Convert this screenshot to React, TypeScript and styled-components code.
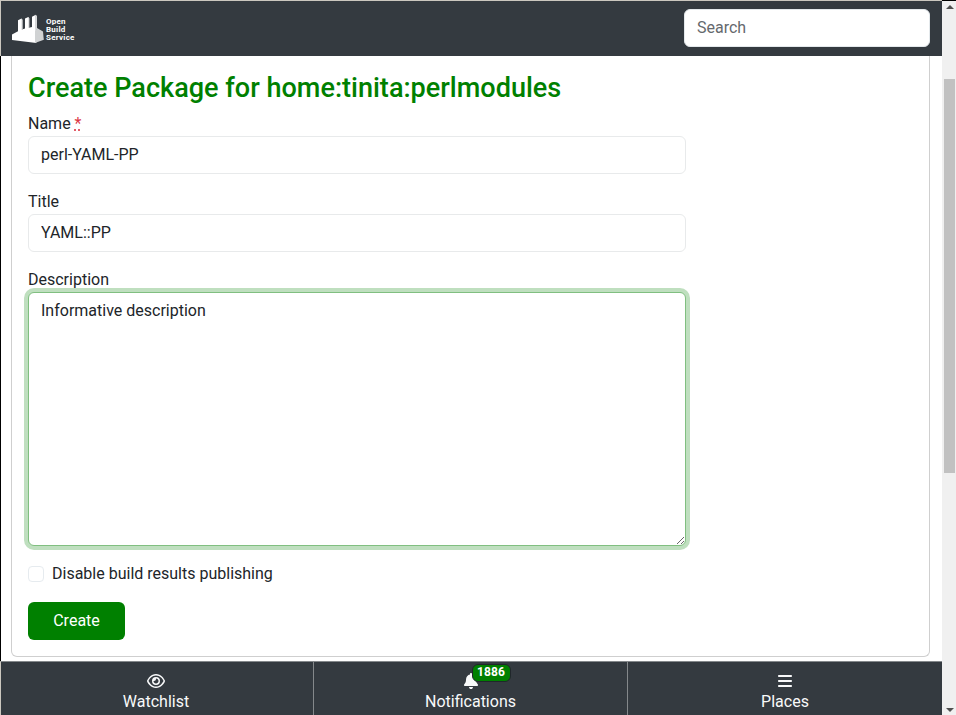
import React from "react";
import styled, { createGlobalStyle } from "styled-components";
import { FaBars, FaBell, FaRegEye } from "react-icons/fa6";

const GlobalStyle = createGlobalStyle`
  * { box-sizing: border-box; }
  body {
    margin: 0;
    overflow: hidden;
    font: 400 16px/24px Roboto, sans-serif;
    color: #212529;
    background: #fff;
  }
`;

const Window = styled.div`
  display: grid;
  grid-template: 715px / 942px 14px;
  width: 956px;
  height: 715px;
`;

const Page = styled.div`
  display: grid;
  grid-template-rows: 56px 605px 54px;
`;

const Header = styled.header`
  display: flex;
  justify-content: space-between;
  padding: 8px 12px 0 11px;
  border-top: 1px solid #cbc7bf;
  border-left: 1px solid #cbc7bf;
  background: #343a40;
`;

const Brand = styled.a`
  display: flex;
  padding-top: 5px;
  color: #fff;
`;

const BrandName = styled.span`
  display: flex;
  flex-direction: column;
  margin: 4px 0 0 2px;
  font-size: 8px;
  font-weight: 700;
  line-height: 8px;
  letter-spacing: 0.25px;
`;

const Search = styled.input`
  width: 246px;
  height: 38px;
  padding: 0 12px 1px;
  border: 1px solid #e4e9ec;
  border-radius: 6px;
  outline: 0;
  font: inherit;
  background: #fff;
  &::placeholder { color: #65696d; opacity: 1; }
`;

const Main = styled.main`
  padding: 0 12px 4px 10px;
  border-left: 1px solid #000;
`;

const Card = styled.section`
  height: 601px;
  padding: 15px 16px 0;
  border: 1px solid #cfcfcf;
  border-top: 0;
  border-radius: 0 0 6px 6px;
`;

const Heading = styled.h3`
  margin: 0 0 7px;
  color: #008000;
  font-size: 27.05px;
  font-weight: 500;
  line-height: 34px;
`;

const Form = styled.form`
  width: 658px;
`;

const Field = styled.div`
  display: flex;
  flex-direction: column;
  margin-bottom: 16px;
`;

const Label = styled.label`
  height: 24px;
`;

const Required = styled.abbr`
  color: #dc3545;
  text-decoration: underline dotted;
`;

const TextInput = styled.input`
  height: 38px;
  padding: 0 12px 1px;
  border: 1px solid #e8eaeb;
  border-radius: 6px;
  outline: 0;
  color: inherit;
  font: inherit;
`;

const TextArea = styled.textarea`
  display: block;
  height: 254px;
  padding: 6px 12px;
  border: 1px solid #80bf80;
  border-radius: 6px;
  outline: 0;
  box-shadow: 0 0 0 4px #bfdfbf;
  color: inherit;
  font: inherit;
  resize: vertical;
`;

const CheckLabel = styled.label`
  display: flex;
  align-items: center;
  gap: 8px;
  height: 24px;
  margin-bottom: 16px;
`;

const Checkbox = styled.input`
  appearance: none;
  width: 16px;
  height: 16px;
  margin: 0;
  border: 1px solid #e6ebef;
  border-radius: 4px;
`;

const Submit = styled.button`
  width: 97px;
  height: 38px;
  padding: 0 0 1px;
  border: 0;
  border-radius: 6px;
  color: #fff;
  background: #008000;
  font: inherit;
`;

const BottomNav = styled.nav`
  display: grid;
  grid-template-columns: 313px 314px 1fr;
  border-top: 1px solid #84888b;
  border-left: 1px solid #cbc7bf;
  background: #343a40;
`;

const NavItem = styled.a`
  display: flex;
  flex-direction: column;
  align-items: center;
  padding-top: 11px;
  color: #f8f9fa;
  &:not(:last-child) { border-right: 1px solid #84888b; }
  &:first-child { padding-right: 2px; }
`;

const NavIcon = styled.span`
  position: relative;
  display: flex;
  height: 17px;
`;

const EyeIcon = styled(FaRegEye)`
  width: 18px;
  height: 16px;
`;

const Badge = styled.span`
  position: absolute;
  top: -9px;
  left: 9px;
  width: 39px;
  height: 18px;
  border: 1px solid #20262b;
  border-radius: 6px;
  color: #fff;
  background: #008000;
  font-size: 12px;
  font-weight: 700;
  line-height: 15px;
  letter-spacing: 0.1px;
  text-align: center;
`;

const Scrollbar = styled.aside`
  display: flex;
  flex-direction: column;
  align-items: center;
  border-top: 1px solid #000;
  background: #f0f0f0;
`;

const Thumb = styled.div`
  width: 11px;
  height: 394px;
  margin: 67px 0 auto 1px;
  background: #c1c1c1;
`;

const Arrow = styled.svg`
  width: 8px;
  height: 4px;
  margin: 4px 0 3px 1px;
  fill: #505050;
`;

const Logo = () => (
  <svg width="32" height="30" viewBox="0 0 32 30">
    <path fill="#fff" d="M0 20.5 6 17.2V6.2L9.5 4.6 10 5.4V15.6L13 14.5V4.4L16.3 3 17 4V13.8L20 13V2.8L23.8 .8V14L24.3 29 0 26Z" />
    <path fill="#d0d2d3" d="M23 17 25 14 31 17.5 31.8 25.8 23 29Z" />
    <path fill="#d8d9da" d="M9.5 4.6 10.7 5.8V15.5L9.5 16ZM16.3 3 17.4 4.3V13.7L16.3 14ZM23.8 .8 25 2V15L23.8 15.5Z" />
  </svg>
);

export default function App() {
  return (
    <>
      <GlobalStyle />
      <Window>
        <Page>
          <Header>
            <Brand>
              <Logo />
              <BrandName>
                <span>Open</span>
                <span>Build</span>
                <span>Service</span>
              </BrandName>
            </Brand>
            <Search placeholder="Search" />
          </Header>
          <Main>
            <Card>
              <Heading>Create Package for home:tinita:perlmodules</Heading>
              <Form>
                <Field>
                  <Label htmlFor="name">Name <Required title="required">*</Required></Label>
                  <TextInput id="name" defaultValue="perl-YAML-PP" />
                </Field>
                <Field>
                  <Label htmlFor="title">Title</Label>
                  <TextInput id="title" defaultValue="YAML::PP" />
                </Field>
                <Field>
                  <Label htmlFor="description">Description</Label>
                  <TextArea id="description" defaultValue="Informative description" />
                </Field>
                <CheckLabel>
                  <Checkbox type="checkbox" />
                  Disable build results publishing
                </CheckLabel>
                <Submit type="button">Create</Submit>
              </Form>
            </Card>
          </Main>
          <BottomNav>
            <NavItem><NavIcon><EyeIcon /></NavIcon>Watchlist</NavItem>
            <NavItem>
              <NavIcon><FaBell size={16} /><Badge>1886</Badge></NavIcon>
              Notifications
            </NavItem>
            <NavItem><NavIcon><FaBars size={16} /></NavIcon>Places</NavItem>
          </BottomNav>
        </Page>
        <Scrollbar>
          <Arrow viewBox="0 0 8 4"><path d="M0 4 4 0 8 4Z" /></Arrow>
          <Thumb />
          <Arrow viewBox="0 0 8 4"><path d="M0 0H8L4 4Z" /></Arrow>
        </Scrollbar>
      </Window>
    </>
  );
}
